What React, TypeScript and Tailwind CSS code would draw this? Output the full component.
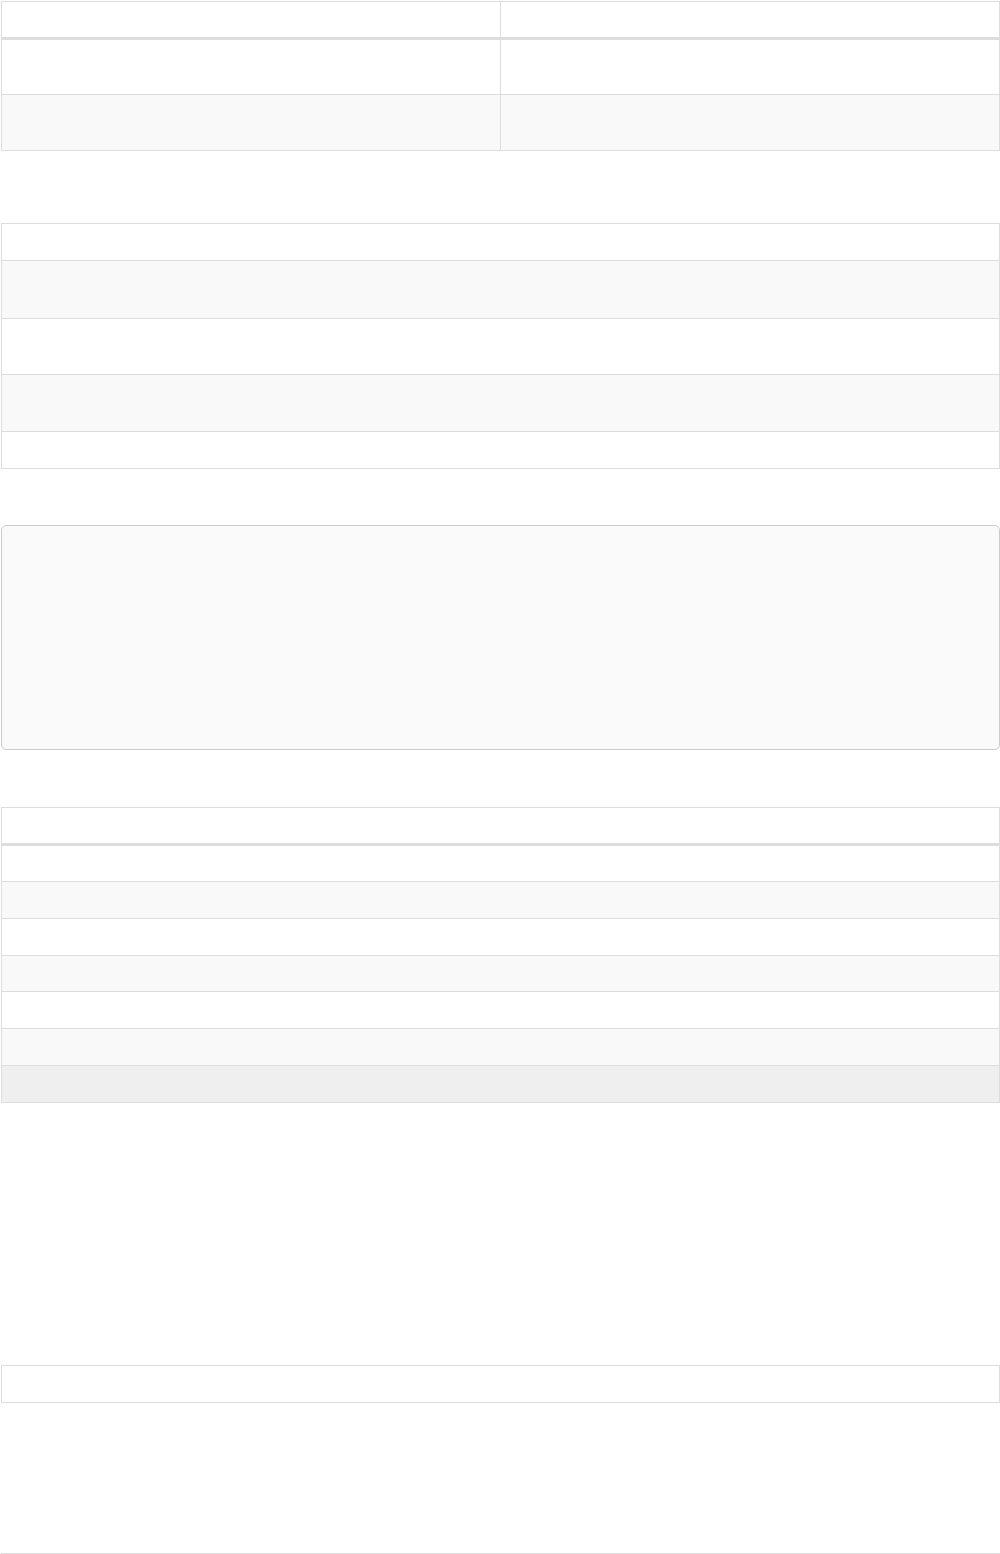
const line = "border-[#dddddd]"

const Cell = ({ h, bg = "", split = false, top = "border-t" }: { h: string, bg?: string, split?: boolean, top?: string }) => (
    <div className={`flex ${h} ${bg} ${top} ${line}`}>
        {split ? (
            <>
                <div className={`w-[499px] border-r ${line}`} />
                <div className="flex-1" />
            </>
        ) : (
            <div className="flex-1" />
        )}
    </div>
)

export default function App() {
    return (
        <div className="bg-white min-h-screen pt-px pl-px font-['Liberation_Sans',sans-serif]">
            {/* two column table */}
            <div className={`border ${line}`}>
                <Cell h="h-[35px]" split top="" />
                <Cell h="h-[57px]" split top="border-t-[3px]" />
                <Cell h="h-[56px]" split bg="bg-[#f9f9f9]" />
            </div>

            {/* striped single column table */}
            <div className={`mt-[72px] border ${line}`}>
                <Cell h="h-[36px]" top="" />
                <Cell h="h-[58px]" bg="bg-[#f9f9f9]" />
                <Cell h="h-[56px]" />
                <Cell h="h-[57px]" bg="bg-[#f9f9f9]" />
                <Cell h="h-[37px]" />
            </div>

            {/* panel */}
            <div className="mt-[56px] h-[225px] rounded-[5px] border border-[#cccccc] bg-[#fafafa]" />

            {/* list table */}
            <div className={`mt-[57px] border ${line}`}>
                <Cell h="h-[35px]" top="" />
                <Cell h="h-[38px]" top="border-t-[3px]" />
                <Cell h="h-[37px]" bg="bg-[#f9f9f9]" />
                <Cell h="h-[37px]" />
                <Cell h="h-[36px]" bg="bg-[#f9f9f9]" />
                <Cell h="h-[37px]" />
                <Cell h="h-[37px]" bg="bg-[#f9f9f9]" />
                <Cell h="h-[37px]" bg="bg-[#efefef]" />
            </div>

            {/* single row table */}
            <div className={`mt-[262px] border ${line}`}>
                <Cell h="h-[36px]" top="" />
            </div>

            <div className={`mt-[150px] border-t ${line}`} />
        </div>
    )
}
